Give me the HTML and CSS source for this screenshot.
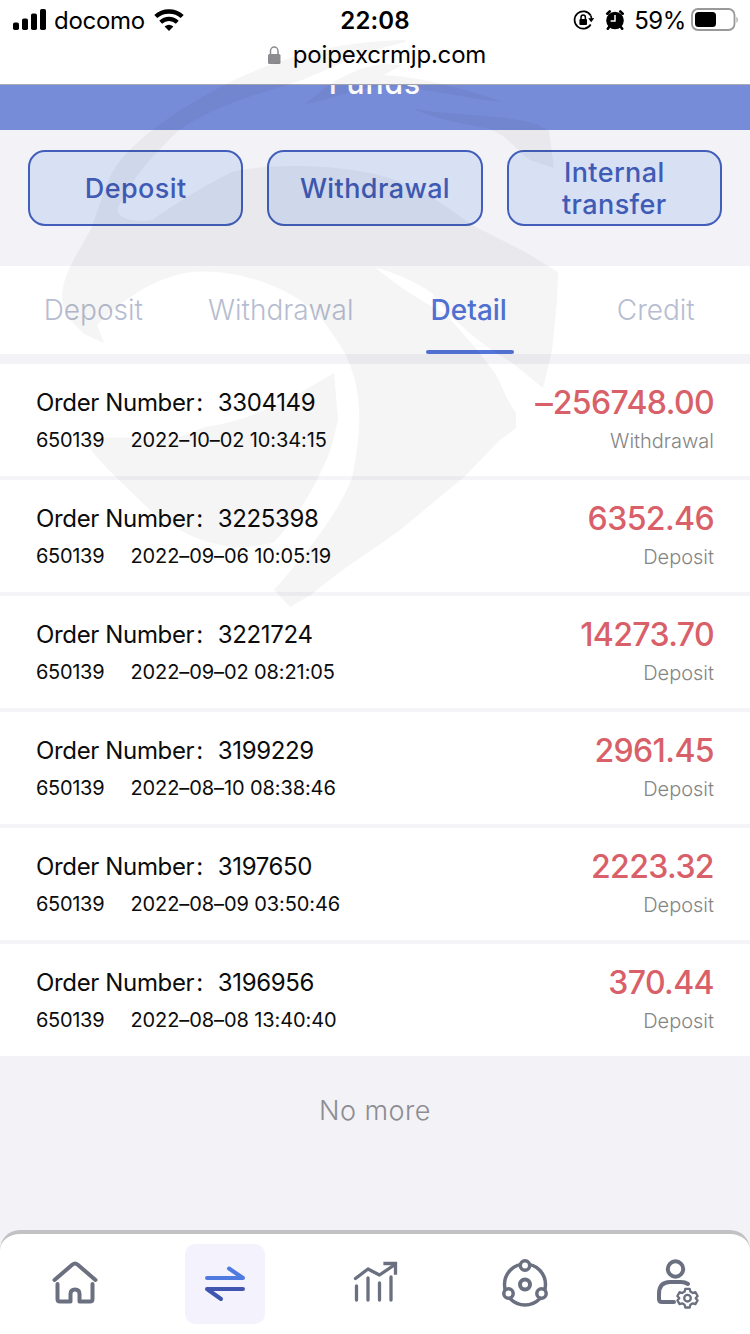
FILE: index.html
```html
<!DOCTYPE html>
<html lang="en">
<head>
<meta charset="utf-8">
<title>Funds</title>
<link rel="stylesheet" href="styles.css">
</head>
<body>
<div class="phone">
  <div class="browser-bar">
    <div class="status">
      <div class="status-left">
        <svg class="signal" width="34" height="22" viewBox="0 0 34 22"><rect x="0" y="13.500" width="6" height="7.500" rx="1.800"/><rect x="9" y="9.500" width="6" height="11.500" rx="1.800"/><rect x="18" y="4.500" width="6" height="16.500" rx="1.800"/><rect x="27" y="0" width="6" height="21" rx="1.800"/></svg>
        <span class="carrier">docomo</span>
        <svg class="wifi" width="30" height="22" viewBox="0 0 30 22"><path d="M1.800 7.500C9 .8 21 .8 28.200 7.500" fill="none" stroke="#000" stroke-width="4.400"/><path d="M6.700 13.200C11.500 8.800 18.500 8.800 23.300 13.200" fill="none" stroke="#000" stroke-width="4.200"/><path d="M10.600 17.600Q15 14 19.400 17.600L15 22Z"/></svg>
      </div>
      <span class="clock">22:08</span>
      <div class="status-right">
        <svg width="21" height="20" viewBox="0 0 21 20"><path d="M17.700 5.500A8.700 8.700 0 1 0 17.700 14.500" fill="none" stroke="#000" stroke-width="1.700"/><path d="M17.700 5.500A8.700 8.700 0 0 1 18.500 9" fill="none" stroke="#000" stroke-width="1.700"/><path d="M15.200 8.200h6l-3 4z"/><rect x="6.400" y="9" width="7.600" height="6" rx="1"/><path d="M8 9.500V7.500a2.200 2.500 0 0 1 4.400 0v2" fill="none" stroke="#000" stroke-width="1.500"/></svg>
        <svg class="alarm" width="20" height="20" viewBox="0 0 20 20"><circle cx="10" cy="10.500" r="8.800"/><path d="M2.300 3.700L4.700 1.500M17.700 3.700L15.300 1.500M4.500 16.500L2.800 18.800M15.500 16.500L17.200 18.800" stroke="#000" stroke-width="2.600" stroke-linecap="round"/><path d="M10 5v6H5.600" fill="none" stroke="#fff" stroke-width="1.500"/></svg>
        <span class="percent">59%</span>
        <svg class="battery" width="48" height="24" viewBox="0 0 48 24"><rect x="1" y="1" width="42.500" height="21" rx="6" fill="none" stroke="#999" stroke-width="1.800"/><rect x="4" y="4" width="21" height="15" rx="3.500"/><path d="M45.500 8.500q2.500 3.200 0 6.500z" fill="#999"/></svg>
      </div>
    </div>
    <div class="address">
      <svg width="13" height="18" viewBox="0 0 13 18"><rect x="0" y="8" width="12.500" height="10" rx="1.500" fill="#8b8b90"/><path d="M2.500 9V5a3.750 4 0 0 1 7.500 0v4" fill="none" stroke="#8b8b90" stroke-width="1.500"/></svg>
      <span>poipexcrmjp.com</span>
    </div>
  </div>

  <header class="title-bar"><h1>Funds</h1></header>

  <div class="actions">
    <button>Deposit</button>
    <button>Withdrawal</button>
    <button>Internal<br>transfer</button>
  </div>

  <nav class="tabs">
    <span>Deposit</span>
    <span>Withdrawal</span>
    <span class="active">Detail</span>
    <span>Credit</span>
  </nav>

  <main class="orders">
    <div class="order"><div><p class="number">Order Number<span class="colon">:</span>3304149</p><p class="meta"><span class="account">650139</span>2022–10–02 10:34:15</p></div><div class="right"><p class="amount"><span class="minus">–</span>256748.00</p><p class="kind">Withdrawal</p></div></div>
    <div class="order"><div><p class="number">Order Number<span class="colon">:</span>3225398</p><p class="meta"><span class="account">650139</span>2022–09–06 10:05:19</p></div><div class="right"><p class="amount">6352.46</p><p class="kind">Deposit</p></div></div>
    <div class="order"><div><p class="number">Order Number<span class="colon">:</span>3221724</p><p class="meta"><span class="account">650139</span>2022–09–02 08:21:05</p></div><div class="right"><p class="amount">14273.70</p><p class="kind">Deposit</p></div></div>
    <div class="order"><div><p class="number">Order Number<span class="colon">:</span>3199229</p><p class="meta"><span class="account">650139</span>2022–08–10 08:38:46</p></div><div class="right"><p class="amount">2961.45</p><p class="kind">Deposit</p></div></div>
    <div class="order"><div><p class="number">Order Number<span class="colon">:</span>3197650</p><p class="meta"><span class="account">650139</span>2022–08–09 03:50:46</p></div><div class="right"><p class="amount">2223.32</p><p class="kind">Deposit</p></div></div>
    <div class="order"><div><p class="number">Order Number<span class="colon">:</span>3196956</p><p class="meta"><span class="account">650139</span>2022–08–08 13:40:40</p></div><div class="right"><p class="amount">370.44</p><p class="kind">Deposit</p></div></div>
  </main>

  <p class="no-more">No more</p>

  <footer class="dock">
    <div class="dock-item"><svg width="80" height="80" viewBox="0 0 80 80"><path d="M19.500 36L37.500 20.500Q40 18.500 42.500 20.500L60.500 36"/><path d="M22.500 40V55Q22.500 57.500 25 57.500H35.500V50Q35.500 45.500 40 45.500T44.500 50V57.500H55Q57.500 57.500 57.500 55V40"/></svg></div>
    <div class="dock-item active"><svg width="80" height="80" viewBox="0 0 80 80"><path d="M22 34H58L44 24.500" stroke="#4f7be0"/><path d="M58 45H22L36 55" stroke="#3f55b0"/></svg></div>
    <div class="dock-item"><svg width="80" height="80" viewBox="0 0 80 80"><g stroke-width="3.300"><path d="M20.500 34.500L33 25L44.500 31L60 20.500"/><path d="M50 19.500H60.500V29" stroke-linecap="square" stroke-linejoin="miter"/><path d="M21.500 42V56M33 34V56M44.500 39V56M56 33V56"/></g></svg></div>
    <div class="dock-item"><svg width="80" height="80" viewBox="0 0 80 80"><g stroke-width="3.500"><circle cx="40" cy="40.500" r="20.500"/><circle cx="40" cy="40.500" r="5" stroke-width="4"/><circle cx="40" cy="21.500" r="4.700" fill="#fff"/><circle cx="23.500" cy="49.500" r="4.700" fill="#fff"/><circle cx="56.500" cy="49.500" r="4.700" fill="#fff"/></g></svg></div>
    <div class="dock-item"><svg width="80" height="80" viewBox="0 0 80 80"><circle cx="40.500" cy="25" r="7.700"/><path d="M53 40Q50 38 46 38H35Q24 38 24 50V55Q24 58 27 58H39"/><g stroke-width="2.300"><path d="M50.300 44.800H54.700L55.400 47.600L57.800 49L60.400 48.200L62.600 52L60.700 54.200L62.600 56.400L60.400 60.100L57.800 59.300L55.400 60.700L54.700 63.500H50.300L49.600 60.700L47.200 59.300L44.600 60.100L42.400 56.400L44.300 54.200L42.400 52L44.600 48.200L47.200 49L49.600 47.600Z"/><circle cx="52.500" cy="54.200" r="3.300"/></g></svg></div>
  </footer>

  <svg class="watermark" width="750" height="620" viewBox="0 0 750 620">
    <path fill-rule="evenodd" d="M405 40C330 42 285 58 245 75C190 100 130 140 112 173C103 190 98 212 91 229C77 255 62 275 62 298C64 318 76 325 84 334L104 343L97 325C117 306 145 281 185 273C235 265 300 290 324 322C340 344 347 355 350 365C364 400 360 440 352 478C340 510 310 550 274 590L290 607L312 594C340 570 370 552 400 530L464 477L500 440L516 428V413C507 400 502 388 498 378C482 354 461 331 445 314C417 299 395 284 376 268C398 273 421 285 432 293C450 319 484 347 511 362L543 388L552 350L557 300L558 272L525 252L470 224C440 200 405 180 370 173C315 163 260 165 232 172C200 188 175 204 152 220C130 223 116 218 118 208C130 182 145 163 178 131C210 108 250 96 290 84C320 75 350 55 405 42Z"/>
    <path d="M305 104C325 88 345 70 382 64L403 65L383 75C430 78 475 92 502 102C460 98 420 86 378 86C350 90 330 100 305 104ZM412 108C455 118 525 112 549 131L554 168L530 160C510 145 505 131 480 127C455 122 432 118 412 108ZM334 373C300 393 260 419 205 427L180 437L85 438C90 455 120 480 150 510C185 537 210 545 240 548L273 543C300 515 322 475 332 445L338 420Z"/>
  </svg>
</div>
</body>
</html>
```
FILE: styles.css
```css
* { box-sizing: border-box; }
body { margin: 0; background: #f2f2f7; font-family: Inter, "Noto Sans CJK SC", sans-serif; color: #0c0c0c; }
p, h1 { margin: 0; font-weight: 400; }

.phone { position: relative; width: 750px; height: 1334px; display: flex; flex-direction: column; overflow: hidden; }

.browser-bar { height: 85px; flex: none; background: #fff; border-bottom: 1px solid #aaaab2; color: #000; }
.status { height: 40px; padding: 0 11px 0 13px; display: grid; grid-template-columns: 1fr auto 1fr; align-items: center; }
.status-left, .status-right { display: flex; align-items: center; }
.status-right { justify-content: flex-end; }
.signal { margin-top: -1px; }
.carrier { margin-left: 7px; font-size: 24px; letter-spacing: -0.3px; line-height: 24px; padding-top: 1px; }
.wifi { margin-left: 9px; }
.clock { font-size: 24px; font-weight: 600; letter-spacing: 0.1px; margin-right: 2px; }
.alarm { margin-left: 11px; }
.percent { margin-left: 9px; font-size: 24px; letter-spacing: -0.4px; }
.battery { margin-left: 5px; }
.address { height: 30px; padding-left: 4px; display: flex; align-items: center; justify-content: center; gap: 12px; font-size: 24px; letter-spacing: -0.2px; line-height: 28px; }

.title-bar { height: 45px; flex: none; overflow: hidden; background: #778cd8; color: #fff; text-align: center; }
.title-bar h1 { margin-top: -22px; font-size: 30px; line-height: 40px; font-weight: 500; letter-spacing: 1px; }

.actions { height: 136px; flex: none; padding: 20px 28px 0; display: flex; gap: 24px; align-items: flex-start; }
.actions button { flex: 1; height: 76px; padding: 2px 0 0; border: 2px solid #415fba; border-radius: 17px; background: #d8e0f4; color: #3f5bb5; font: 500 27px/32px Inter, sans-serif; letter-spacing: 0.4px; }

.tabs { height: 88px; flex: none; background: #fff; display: grid; grid-template-columns: repeat(4, 1fr); justify-items: center; font-size: 28px; font-weight: 300; color: #b7bdd0; }
.tabs span { height: 88px; line-height: 89px; margin-right: 1px; }
.tabs .active { position: relative; width: 88px; margin: 0 0 0 3px; padding-right: 3px; text-align: center; color: #5375d9; font-weight: 500; }
.tabs .active::after { content: ""; position: absolute; left: 0; bottom: 0; width: 88px; height: 4px; border-radius: 2px; background: #5375d9; }

.orders { margin-top: 10px; flex: none; display: flex; flex-direction: column; gap: 4px; background: #f5f5f7; }
.order { height: 112px; padding: 20px 36px 0; background: #fff; display: flex; justify-content: space-between; }
.number { font-size: 24px; line-height: 38px; letter-spacing: -0.35px; }
.colon { display: inline-block; width: 23.5px; padding-left: 2px; }
.meta { font-size: 20px; line-height: 36px; letter-spacing: -0.1px; }
.account { display: inline-block; width: 94.5px; letter-spacing: -0.3px; }
.right { text-align: right; }
.amount { font-size: 32px; line-height: 38px; font-weight: 500; letter-spacing: -0.6px; color: #d95f69; }
.minus { display: inline-block; margin-right: 1px; transform: scaleX(1.1); }
.kind { font-size: 20px; line-height: 38px; font-weight: 300; color: #858585; }

.no-more { margin-top: 34px; text-align: center; font-size: 27px; line-height: 42px; font-weight: 300; color: #8c8c92; letter-spacing: 0.5px; }

.dock { margin-top: auto; height: 104px; flex: none; padding-top: 10px; background: #fff; border-top: 4px solid #c2c2c4; border-radius: 20px 20px 0 0; display: grid; grid-template-columns: repeat(5, 150px); justify-items: center; }
.dock-item { width: 80px; height: 80px; border-radius: 10px; }
.dock-item.active { background: #f4f3fd; }
.dock-item svg { display: block; fill: none; stroke: #6b7080; stroke-width: 4; stroke-linecap: round; stroke-linejoin: round; }

.watermark { position: absolute; left: 0; top: 0; fill: #000; opacity: 0.036; pointer-events: none; }
```
